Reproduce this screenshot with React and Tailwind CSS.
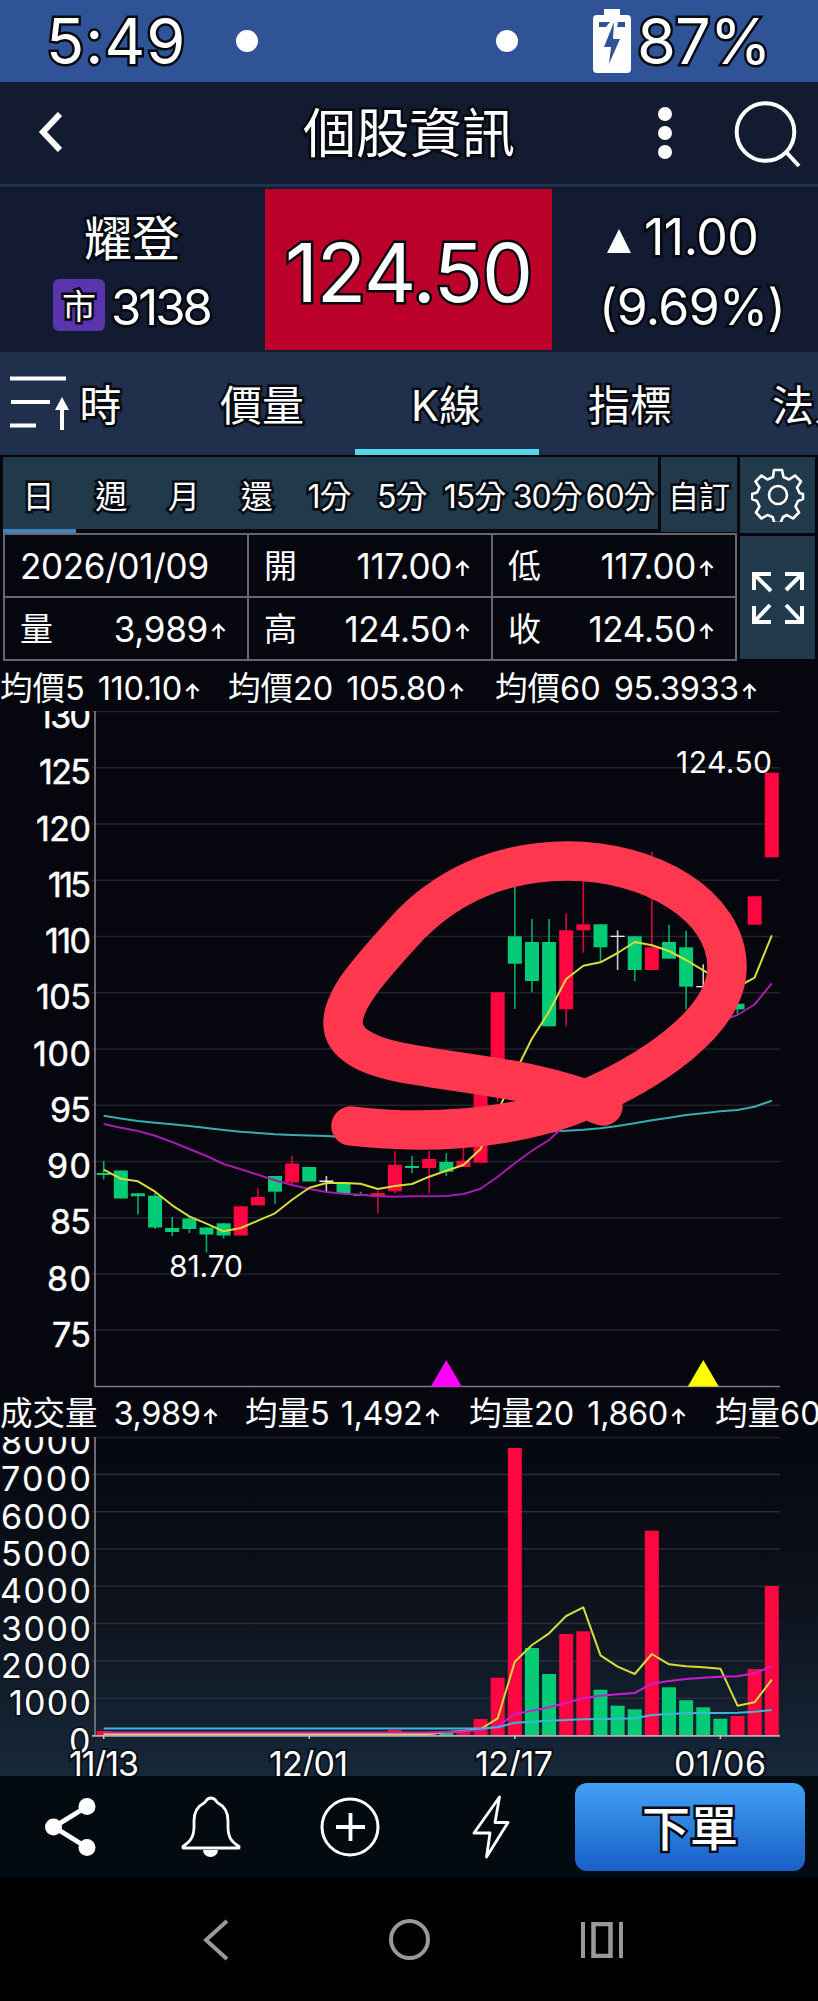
import clsx from 'clsx'

const UP = '#ff0640'
const DOWN = '#04cc76'
const FLAT = '#f0f0f0'

const STEP = 17.13
const xAt = (i) => 103.7 + i * STEP

// [color, wick top, body top, body bottom, wick bottom]
const candles = [
  [DOWN, 1161, 1173, 1175, 1179.5],
  [DOWN, 1170.5, 1170.5, 1198.5, 1198.5],
  [DOWN, 1193, 1193.3, 1196.3, 1214.5],
  [DOWN, 1191, 1195.7, 1227.5, 1229],
  [DOWN, 1217, 1228, 1232, 1236],
  [DOWN, 1217, 1218.5, 1229, 1233],
  [DOWN, 1227.5, 1227.5, 1234.5, 1252.5],
  [DOWN, 1223, 1223.3, 1235.5, 1238.5],
  [UP, 1206, 1206.3, 1235.5, 1235.5],
  [UP, 1188.5, 1197, 1205.3, 1205.3],
  [DOWN, 1176, 1176, 1191.7, 1203.7],
  [UP, 1156, 1163.5, 1182.5, 1184],
  [DOWN, 1167, 1167, 1181.5, 1181.5],
  [FLAT, 1176, 1180.5, 1182, 1191.7],
  [DOWN, 1182.5, 1182.5, 1193.7, 1194],
  [DOWN, 1191.7, 1194, 1196, 1196],
  [UP, 1191, 1193, 1197, 1213.5],
  [UP, 1151.3, 1164.7, 1191.3, 1193],
  [DOWN, 1156, 1166, 1168, 1173],
  [UP, 1151, 1159, 1168, 1193],
  [DOWN, 1153, 1162, 1171.7, 1176],
  [UP, 1143, 1160.7, 1167, 1167],
  [UP, 1082, 1082, 1162.7, 1162.7],
  [UP, 992.3, 992.3, 1080, 1102],
  [DOWN, 870, 936.3, 963.7, 1009],
  [DOWN, 919, 942, 981, 992.3],
  [DOWN, 919, 942, 1026.3, 1026.3],
  [UP, 913.3, 930.3, 1009.3, 1026.3],
  [UP, 870, 924.3, 930.3, 952.7],
  [DOWN, 924.3, 924.3, 947.3, 961.7],
  [FLAT, 930.3, 935.7, 937, 970],
  [DOWN, 936.3, 936.3, 970, 981],
  [UP, 851.5, 947.3, 970, 970],
  [DOWN, 924.7, 942, 958.7, 958.7],
  [DOWN, 930.7, 947.3, 986.7, 1009.3],
  [FLAT, 964.3, 986, 987.3, 990],
  [DOWN, 990, 992, 1003, 1003],
  [DOWN, 1003.7, 1003.7, 1009.3, 1015],
  [UP, 896.3, 896.3, 924.7, 924.7],
  [UP, 772.7, 772.7, 857.3, 857.3],
]

const ma5 = [
  1169.7, 1178.7, 1181.3, 1191.7, 1205.3, 1216.3, 1223.7, 1231.3, 1228, 1220.7, 1213.3, 1199.7, 1187.7, 1183,
  1183, 1183.7, 1189, 1186, 1184, 1176.7, 1170.7, 1165, 1149, 1112, 1073, 1038.5, 1011.7, 979, 965.7, 962.3,
  953, 942, 945.3, 951, 960, 970.3, 980, 987, 977.7, 935.3,
]
const ma20 = [
  1124, 1127.7, 1131, 1135.7, 1142, 1149, 1156, 1164, 1169.3, 1174.7, 1180.3, 1185, 1189, 1192, 1193.7, 1194.7,
  1196.3, 1196.7, 1196.3, 1196.3, 1196, 1194, 1188.7, 1176.7, 1163.3, 1150.7, 1140, 1124, 1110, 1098, 1085,
  1075, 1064, 1050, 1036, 1026, 1021, 1015, 1004.5, 983.3,
]
const ma60 = [
  1115.7, 1118.5, 1121, 1122.7, 1124.3, 1126, 1128, 1130, 1131.7, 1133, 1134.3, 1135, 1135.5, 1136, 1137, 1137,
  1137, 1137, 1137, 1137, 1137, 1137, 1136, 1135, 1134, 1133, 1131.5, 1130.7, 1129.7, 1128.3, 1126, 1123.3,
  1120.3, 1117.7, 1115, 1113.3, 1111.3, 1110, 1106.7, 1100.7,
]

// [color, bar top]
const volumes = [
  [UP, 1731], [UP, 1732], [DOWN, 1732], [UP, 1732], [DOWN, 1732.5], [UP, 1733], [DOWN, 1733], [DOWN, 1733],
  [UP, 1733], [UP, 1733], [DOWN, 1733], [UP, 1732.5], [DOWN, 1733], [UP, 1732.5], [UP, 1733], [DOWN, 1733],
  [UP, 1733], [UP, 1730], [DOWN, 1733], [UP, 1732.5], [DOWN, 1732.5], [UP, 1731],
  [UP, 1719], [UP, 1677.7], [UP, 1448], [DOWN, 1648], [DOWN, 1674], [UP, 1634], [UP, 1631.3], [DOWN, 1689.7],
  [DOWN, 1705.7], [DOWN, 1709.3], [UP, 1530.7], [DOWN, 1687.3], [DOWN, 1700.3], [DOWN, 1707.3],
  [DOWN, 1718.7], [UP, 1716], [UP, 1669], [UP, 1586],
]
const flatRun = (n, y) => Array(n).fill(y)
const vol5 = [
  ...flatRun(20, 1734), 1732, 1731, 1729, 1718.3, 1661.7, 1645, 1633.3, 1616, 1607.3, 1655.3, 1666.7, 1674, 1654,
  1664.3, 1666.3, 1667.3, 1668.7, 1705.7, 1702.3, 1679.7,
]
const vol20 = [
  ...flatRun(20, 1732.5), 1732, 1731.5, 1730, 1726, 1714, 1710.7, 1707.3, 1703, 1698, 1695.7, 1694.3, 1693, 1683.7,
  1681, 1679, 1677.7, 1676.7, 1676.3, 1673.3, 1666.3,
]
const vol60 = [
  ...flatRun(22, 1728.5), 1728.5, 1727.3, 1722.7, 1721.7, 1720.7, 1720, 1719.3, 1719, 1718.7, 1718.3, 1715, 1714,
  1713.3, 1713.1, 1713, 1712.7, 1711.7, 1710,
]

const priceTicks = [130, 125, 120, 115, 110, 105, 100, 95, 90, 85, 80, 75]
const volumeTicks = [8000, 7000, 6000, 5000, 4000, 3000, 2000, 1000, 0]
const digitWidth = { 130: 53, 125: 52, 120: 55, 115: 43, 110: 46, 105: 55, 100: 58, 95: 41, 90: 44, 85: 41, 80: 44, 75: 39 }

const outline = '[paint-order:stroke_fill] [-webkit-text-stroke:5px_#080a12]'

const points = (values) => values.map((y, i) => `${xAt(i).toFixed(1)},${y}`).join(' ')

function Line({ values, color }) {
  return <polyline points={points(values)} fill="none" stroke={color} strokeWidth="2" strokeLinejoin="round" />
}

function Arrow() {
  return (
    <svg viewBox="0 0 16 17" className="w-[15px] h-4 ml-[3px] mt-[3px] shrink-0" fill="none" stroke="white" strokeWidth="2.6">
      <path d="M8 17V2M1.5 8.5L8 2l6.5 6.5" />
    </svg>
  )
}

function StatusBar() {
  return (
    <div className="flex items-center h-[82px] bg-[#305296] pl-[46px]">
      <span className={clsx('w-[142px] text-[63px] leading-none tracking-[1px]', outline)}>5:49</span>
      <span className="ml-[48px] w-[22px] h-[22px] rounded-full bg-white" />
      <span className="ml-[238px] w-[22px] h-[22px] rounded-full bg-white" />
      <svg viewBox="0 0 38 64" className="ml-[75px] w-[38px] h-16">
        <path fill="white" d="M11 0h16v6h7a4 4 0 0 1 4 4v50a4 4 0 0 1-4 4H4a4 4 0 0 1-4-4V10a4 4 0 0 1 4-4h7z" />
        <path fill="#305296" d="M6 13h11l-4 5H6zM25 13h7v5h-8zM21 13L11 38h7l-2 17 11-25h-7z" />
      </svg>
      <span className={clsx('ml-[6px] text-[63px] leading-none tracking-[-1px]', outline)}>87%</span>
    </div>
  )
}

function Header() {
  return (
    <div className="relative flex items-center justify-center h-[105px] bg-[#131b30] border-b-[3px] border-[#1e3153]">
      <svg viewBox="0 0 24 40" className="absolute left-[38px] top-[30px] w-6 h-10" fill="none" stroke="white" strokeWidth="6">
        <path d="M22 2L5 20l17 18" />
      </svg>
      <h1 className={clsx('pt-[2px] text-[53px] leading-none', outline)}>個股資訊</h1>
      <div className="absolute left-[658px] top-[25px] flex flex-col gap-[5px]">
        <span className="size-[14px] rounded-full bg-white" />
        <span className="size-[14px] rounded-full bg-white" />
        <span className="size-[14px] rounded-full bg-white" />
      </div>
      <svg viewBox="0 0 68 68" className="absolute left-[734px] top-[18px] size-[68px]" fill="none" stroke="white" strokeWidth="4">
        <circle cx="31.500" cy="32" r="28.800" />
        <path d="M52 52l13 14" />
      </svg>
    </div>
  )
}

function Quote() {
  return (
    <div className="flex h-[165px] bg-[#121b31]">
      <div className="w-[265px] pt-[28px]">
        <div className={clsx('pl-[84px] text-[48px] leading-none', outline)}>耀登</div>
        <div className="mt-[15px] pl-[53px] flex items-center">
          <span className={clsx('size-[52px] rounded-md bg-[#5934ac] flex items-center justify-center text-[34px] leading-none pt-[3px]', outline)}>市</span>
          <span className={clsx('ml-[6px] pt-[5px] text-[49px] leading-none tracking-[-3px]', outline)}>3138</span>
        </div>
      </div>
      <div className="w-[287px] h-[161px] mt-[2px] bg-[#bb0029] flex items-center justify-center">
        <span className={clsx('mt-[7px] text-[81px] leading-none tracking-[-1px]', outline)}>124.50</span>
      </div>
      <div className="w-[266px]">
        <div className="flex items-center pl-[55px] pt-[25px]">
          <svg viewBox="0 0 24 24" className="w-6 h-6 mt-[7px]">
            <path fill="white" d="M12 0L24 24H0z" />
          </svg>
          <span className={clsx('ml-[13px] text-[50px] leading-none tracking-[-0.5px]', outline)}>11.00</span>
        </div>
        <div className={clsx('pl-[47px] mt-[20px] text-[50px] leading-none tracking-[-0.6px]', outline)}>(9.69%)</div>
      </div>
    </div>
  )
}

const tabs = ['時', '價量', 'K線', '指標', '法人']

function Tabs() {
  return (
    <div className="relative h-[103px] bg-[#202f4b] overflow-hidden flex">
      <div className="flex -ml-[13px]">
        {tabs.map((t) => (
          <div
            key={t}
            className={clsx(
              'w-[184px] shrink-0 flex items-center justify-center text-[42px] leading-none border-b-[6px] pt-[11px] pr-[2px]',
              t === 'K線' ? 'border-[#52d8ea]' : 'border-transparent',
              t === '時' && 'pl-[45px]',
              outline
            )}
          >
            {t}
          </div>
        ))}
      </div>
      <svg viewBox="0 0 62 56" className="absolute left-[9px] top-[24px] w-[62px] h-14" stroke="white" strokeWidth="4">
        <path d="M1 2.5h56M2 26h39M1 49.5h26M53 54V28" />
        <path d="M53 21l7 13H46z" fill="white" stroke="none" />
      </svg>
    </div>
  )
}

const periods = ['日', '週', '月', '還', '1分', '5分', '15分', '30分', '60分']

const cells = [
  ['2026/01/09'],
  ['開', '117.00'],
  ['低', '117.00'],
  ['量', '3,989'],
  ['高', '124.50'],
  ['收', '124.50'],
]

function Panel() {
  return (
    <div className="flex gap-[3px] px-[3px] pt-[2px] bg-[#05060e]">
      <div className="w-[734px]">
        <div className="flex gap-[3px]">
          <div className="w-[655px] grid grid-cols-9 h-[76px] bg-[#213a4b]">
            {periods.map((p, i) => (
              <div
                key={p}
                className={clsx(
                  'flex items-center justify-center text-[32px] leading-none tracking-[-1px] whitespace-nowrap border-b-[4px] pt-[7px] pr-[3px]',
                  i === 0 ? 'border-[#3d85c0]' : 'border-[#05060e]',
                  outline
                )}
              >
                {p}
              </div>
            ))}
          </div>
          <div className={clsx('w-[76px] h-[75px] bg-[#213a4b] flex items-center justify-center text-[31px] leading-none pt-[3px]', outline)}>自訂</div>
        </div>
        <div className="grid grid-cols-3 gap-[2px] p-[2px] bg-[#66666c]">
          {cells.map(([label, value]) => (
            <div key={label} className="h-[61px] bg-[#05060e] flex items-center justify-between pl-[15px] pr-[21px] pt-px">
              <span className={value ? 'text-[33px] leading-none' : 'text-[35px] leading-none tracking-[-0.3px]'}>{label}</span>
              {value && (
                <span className="flex items-center text-[35px] leading-none tracking-[-0.3px]">
                  {value}
                  <Arrow />
                </span>
              )}
            </div>
          ))}
        </div>
      </div>
      <div className="w-[75px] flex flex-col gap-[3px]">
        <div className="h-[76px] bg-[#213a4b] flex items-center justify-center">
          <svg viewBox="0 0 54 54" className="size-[54px]" fill="none" stroke="white" strokeWidth="2.6" strokeLinejoin="round">
            <path d="M23 2h8l1.5 7 5.500 2.500 6-4 6 6-4 6 2.500 5.500 3.500 1v5l-5 2-2.500 5.500 3.500 6-6 6-6-3.500-4 2-2.500 6h-6l-2-6-5-2-6 3.500-5.500-6 3.500-6-2.500-5.500-5-2v-5l5-1.500 2.500-5-4-6 6-6 6 4 5.500-2.500z" />
            <circle cx="27" cy="27" r="9" />
          </svg>
        </div>
        <div className="h-[123px] bg-[#213a4b] flex items-center justify-center">
          <svg viewBox="0 0 52 52" className="size-[52px]" fill="none" stroke="white" strokeWidth="4">
            <path d="M2 18V2h17M2 2l17 17M33 2h17v16M50 2L34 18M2 34v16h17M2 50l16-17M50 34v16H33M50 50L34 33" />
          </svg>
        </div>
      </div>
    </div>
  )
}

function Avg({ label, value, className, gap }) {
  return (
    <span className={clsx('flex items-center shrink-0 text-[32.5px] leading-none', className)}>
      {label}
      <span className={clsx('tracking-[-0.4px]', gap)}>{value}</span>
      {value && <Arrow />}
    </span>
  )
}

function PriceChart() {
  return (
    <svg viewBox="0 711 818 677" className="block w-[818px] h-[677px]">
      {priceTicks.map((v) => {
        const y = 711.5 + (130 - v) * 11.25
        return (
          <g key={v}>
            <path d={`M92 ${y}H780`} stroke="#22232b" strokeWidth="1.5" />
            <text x={91 - digitWidth[v]} y={y + 16.5} textLength={digitWidth[v]} fontSize="34" fill="white" stroke="white" strokeWidth="0.5">{v}</text>
          </g>
        )
      })}
      <path d="M95 711V1386.5H780" fill="none" stroke="#7c7c82" strokeWidth="1.7" />
      {candles.map(([color, high, top, bottom, low], i) => (
        <g key={i} fill={color}>
          <rect x={xAt(i) - 0.8} y={high} width="1.6" height={low - high} opacity="0.85" />
          <rect x={xAt(i) - 7} y={top} width="14" height={bottom - top} />
        </g>
      ))}
      <Line values={ma60} color="#35aeb0" />
      <Line values={ma20} color="#a41cac" />
      <Line values={ma5} color="#d8dc3a" />
      <path d="M446.3 1360l15.5 26.5h-31z" fill="#ff00ff" />
      <path d="M703.3 1360l15.5 26.5h-31z" fill="#ffff00" />
      <text x="676" y="773" textLength="96" fontSize="30" fill="white">124.50</text>
      <text x="169" y="1277" textLength="74" fontSize="30" fill="white">81.70</text>
      <path
        d="M351 1126C420 1134 500 1131 568 1107C655 1072 727 1020 727 967C727 905 650 861 568 861C510 861 455 880 411 924C365 974 343 1000 343 1023C343 1045 370 1058 415 1065C480 1076 540 1080 603 1106"
        fill="none"
        stroke="#ff374f"
        strokeWidth="39.5"
        strokeLinecap="round"
        strokeLinejoin="round"
      />
    </svg>
  )
}

const dates = [
  ['11/13', 0, 69, 70],
  ['12/01', 12, 269, 79],
  ['12/17', 24, 475, 78],
  ['01/06', 36, 674, 92],
]

function VolumeChart() {
  return (
    <svg viewBox="0 1437 818 339" className="block w-[818px] h-[339px]">
      {volumeTicks.map((v) => {
        const y = 1735.5 - v * 0.0373
        const w = v === 0 ? 22 : v === 1000 ? 82 : v === 4000 ? 91 : 90
        return (
          <g key={v}>
            <path d={`M92 ${y}H780`} stroke="#2a2d37" strokeWidth="1.5" />
            <text x={91 - w} y={y + 17} textLength={w} fontSize="34" fill="white" className="[paint-order:stroke]" stroke="#0a1018" strokeWidth="3">{v}</text>
          </g>
        )
      })}
      <path d="M95 1437V1735.5" fill="none" stroke="#7c7c82" strokeWidth="1.7" />
      {volumes.map(([color, top], i) => (
        <rect key={i} x={xAt(i) - 7} y={top} width="14" height={1735.5 - top} fill={color} />
      ))}
      <path d="M92 1735.8H780" stroke="#b9a9b0" strokeWidth="1.7" />
      <Line values={vol5} color="#d8dc3a" />
      <Line values={vol20} color="#c81fd0" />
      <Line values={vol60} color="#3fb6d6" />
      {dates.map(([d, i, x, w]) => (
        <g key={d}>
          <path d={`M${xAt(i)} 1735v4`} stroke="#c8c8c8" strokeWidth="1.5" />
          <text x={x} y="1775.5" textLength={w} fontSize="34" fill="white" className="[paint-order:stroke]" stroke="#0a1018" strokeWidth="4">{d}</text>
        </g>
      ))}
    </svg>
  )
}

function ActionBar() {
  return (
    <div className="flex items-center h-[102px] bg-[#030b10]">
      <svg viewBox="0 0 52 60" className="ml-[44px] w-[52px] h-[60px]" fill="white" stroke="white">
        <path d="M43 9.5L10 30l33 20.5" fill="none" strokeWidth="5" />
        <circle cx="43" cy="9.5" r="8.5" stroke="none" />
        <circle cx="9.5" cy="30" r="8.5" stroke="none" />
        <circle cx="43" cy="50.5" r="8.5" stroke="none" />
      </svg>
      <svg viewBox="0 0 60 62" className="ml-[85px] w-[60px] h-[62px]" fill="none" stroke="white" strokeWidth="2.8" strokeLinejoin="round">
        <path d="M2 50.5c7-5 11-9 11-20V25c0-9 4-15 10-18 2-1 2-5 7-5s5 4 7 5c6 3 10 9 10 18v6c0 11 4 15 11 19.5v1.5H2z" />
        <path d="M22 54h15a7.5 7 0 0 1-15 0z" fill="white" stroke="none" />
      </svg>
      <svg viewBox="0 0 60 60" className="ml-[79px] size-[60px]" fill="none" stroke="white" strokeWidth="3">
        <circle cx="30" cy="30" r="28" />
        <path d="M16 30h29M30.5 16v28" strokeWidth="3.8" />
      </svg>
      <svg viewBox="0 0 38 66" className="ml-[92px] w-[38px] h-[66px]" fill="none" stroke="white" strokeWidth="2.8" strokeLinejoin="round">
        <path d="M27.5 3L2 39h16l-3.5 24L36 28.5H23z" />
      </svg>
      <button className={clsx('ml-[65px] w-[230px] h-[88px] rounded-xl bg-linear-to-b from-[#42a0f5] to-[#195fc6] pt-[3px] text-[48px] leading-none font-medium', outline)}>
        下單
      </button>
    </div>
  )
}

function NavBar() {
  return (
    <div className="flex items-center h-[123px] bg-black text-[#999]">
      <svg viewBox="0 0 26 42" className="ml-[203px] w-[26px] h-[42px]" fill="none" stroke="currentColor" strokeWidth="4">
        <path d="M24 2L3 21l21 19" />
      </svg>
      <span className="ml-[160px] size-[41px] rounded-full border-[4.5px] border-current" />
      <svg viewBox="0 0 42 36" className="ml-[151px] w-[42px] h-9" fill="none" stroke="currentColor">
        <path d="M2 0v36M40 0v36" strokeWidth="4" />
        <rect x="12.5" y="2" width="17" height="32" strokeWidth="4.5" />
      </svg>
    </div>
  )
}

export default function App() {
  return (
    <div className="w-[818px] h-[2001px] overflow-hidden bg-[#05060e] text-white font-[Inter,'Noto_Sans_CJK_TC',sans-serif]">
      <StatusBar />
      <Header />
      <Quote />
      <Tabs />
      <Panel />
      <div className="flex items-center h-[50px] pt-[6px]">
        <Avg label="均價5" value="110.10" gap="ml-[13px]" className="w-[228px]" />
        <Avg label="均價20" value="105.80" gap="ml-[13px]" className="w-[267px]" />
        <Avg label="均價60" value="95.3933" gap="ml-[13px]" />
      </div>
      <PriceChart />
      <div className="bg-linear-to-b from-[#05060e] via-[#0c1019] to-[#16283a]">
        <div className="flex items-center h-[49px] pt-[4px] overflow-hidden">
          <Avg label="成交量" value="3,989" gap="ml-[16px]" className="w-[245px]" />
          <Avg label="均量5" value="1,492" gap="ml-[11px]" className="w-[224px]" />
          <Avg label="均量20" value="1,860" gap="ml-[13px]" className="w-[246px]" />
          <Avg label="均量60" />
        </div>
        <VolumeChart />
      </div>
      <ActionBar />
      <NavBar />
    </div>
  )
}
